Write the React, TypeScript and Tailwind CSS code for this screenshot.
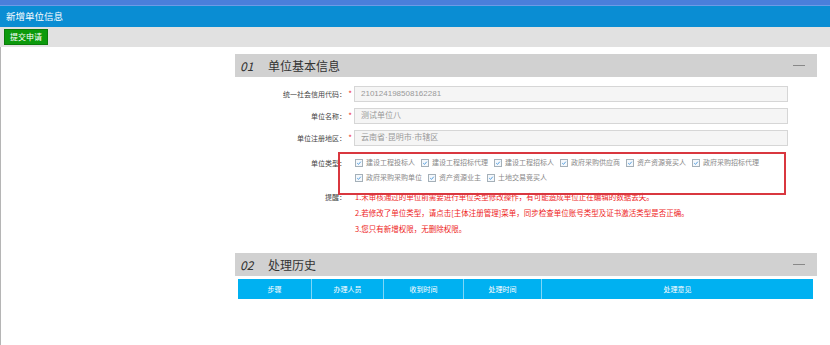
const typesRow1 = ["建设工程投标人", "建设工程招标代理", "建设工程招标人", "政府采购供应商", "资产资源竞买人", "政府采购招标代理"];
const typesRow2 = ["政府采购采购单位", "资产资源业主", "土地交易竞买人"];

const notes = [
  "1.未审核通过的单位前需要进行单位类型修改操作，有可能造成单位正在编辑的数据丢失。",
  "2.若修改了单位类型，请点击[主体注册管理]菜单，同步检查单位账号类型及证书激活类型是否正确。",
  "3.您只有新增权限，无删除权限。",
];

const columns = [
  { title: "步骤", w: "w-[73px]" },
  { title: "办理人员", w: "w-[72px]" },
  { title: "收到时间", w: "w-[80px]" },
  { title: "处理时间", w: "w-[78px]" },
  { title: "处理意见", w: "flex-1" },
];

function SectionHeader({ no, title }: { no: string; title: string }) {
  return (
    <div className="flex h-[23px] items-center bg-[#d1d1d1] pl-[5px] pr-[12px] text-[#333]">
      <span className="w-[28px] text-[12px] italic">{no}</span>
      <span className="text-[12px]">{title}</span>
      <span className="ml-auto h-px w-[12px] bg-[#888]" />
    </div>
  );
}

function Field({ label, value }: { label: string; value: string }) {
  return (
    <div className="flex h-[16px] items-center">
      <label className="w-[111px] text-right text-[7px] text-[#444]">{label}</label>
      <span className="w-[8px] text-center text-[8px] text-[#e33]">*</span>
      <div
        className="flex h-full w-[434px] items-center border border-[#d6d6d6] bg-[#f5f5f5] px-[6px] text-[8px] text-[#999]"
        style={{ fontFamily: '"Liberation Sans", "Noto Sans CJK SC", sans-serif' }}
      >
        {value}
      </div>
    </div>
  );
}

function Check({ label }: { label: string }) {
  return (
    <div className="flex items-center gap-[3px]">
      <span className="flex h-[8px] w-[8px] items-center justify-center border border-[#a5b0b8] bg-[#f4f8fc]">
        <svg viewBox="0 0 10 10" className="h-[6px] w-[6px]">
          <path d="M2 5.2 L4.2 7.3 L8 2.8" fill="none" stroke="#3b8fd8" strokeWidth="1.4" />
        </svg>
      </span>
      <span className="text-[7px] text-[#888]">{label}</span>
    </div>
  );
}

export default function App() {
  return (
    <div
      className="flex h-[345px] w-[830px] flex-col overflow-hidden bg-white"
      style={{ fontFamily: '"Noto Sans CJK SC", "Noto Sans", sans-serif' }}
    >
      <div className="h-[6px] border-b border-[#6d9be6] bg-[#4a7fdb]" />
      <div className="flex h-[21px] items-center bg-[#0a8dd3] pl-[6px] text-[9.5px] text-white">新增单位信息</div>
      <div className="flex h-[20px] items-center bg-[#e1e1e1] pl-[4px]">
        <button className="flex h-[16px] w-[44px] items-center justify-center border border-[#0a7a0a] bg-[#0c9a0c] text-[8px] text-white">
          提交申请
        </button>
      </div>

      <div className="flex-1 border-l border-[#b5b5b5]">
        <div className="relative ml-[234px] w-[582px] pt-[7px]">
          <SectionHeader no="01" title="单位基本信息" />

          <div className="mt-[9px] flex flex-col gap-[6px]">
            <Field label="统一社会信用代码：" value="210124198508162281" />
            <Field label="单位名称：" value="测试单位八" />
            <Field label="单位注册地区：" value="云南省·昆明市·市辖区" />
          </div>

          <div className="mt-[9px] flex">
            <label className="w-[111px] pt-[3px] text-right text-[7px] text-[#444]">单位类型：</label>
            <div className="ml-[9px] flex flex-col">
              <div className="flex h-[15px] items-center gap-[6px]">
                {typesRow1.map((t) => (
                  <Check key={t} label={t} />
                ))}
              </div>
              <div className="flex h-[15px] items-center gap-[6px]">
                {typesRow2.map((t) => (
                  <Check key={t} label={t} />
                ))}
              </div>
            </div>
          </div>

          <div className="mt-[4px] flex">
            <label className="w-[111px] text-right text-[7px] leading-[16px] text-[#444]">提醒：</label>
            <div className="ml-[9px] flex flex-col">
              {notes.map((n) => (
                <p key={n} className="text-[7.5px] leading-[16px] text-[#ee1c1c]">
                  {n}
                </p>
              ))}
            </div>
          </div>

          {/* annotation box */}
          <div className="absolute left-[103px] top-[105px] h-[43px] w-[448px] border-2 border-[#d9373f]" />

          <div className="mt-[16px]">
            <SectionHeader no="02" title="处理历史" />
          </div>

          <div className="mx-[3px] mr-[4px] mt-[3px] flex h-[20px] bg-[#00b1f1]">
            {columns.map((c, i) => (
              <div
                key={c.title}
                className={`${c.w} flex items-center justify-center text-[7px] text-white ${i > 0 ? "border-l border-[#7fd6f6]" : ""}`}
              >
                {c.title}
              </div>
            ))}
          </div>
        </div>
      </div>
    </div>
  );
}
